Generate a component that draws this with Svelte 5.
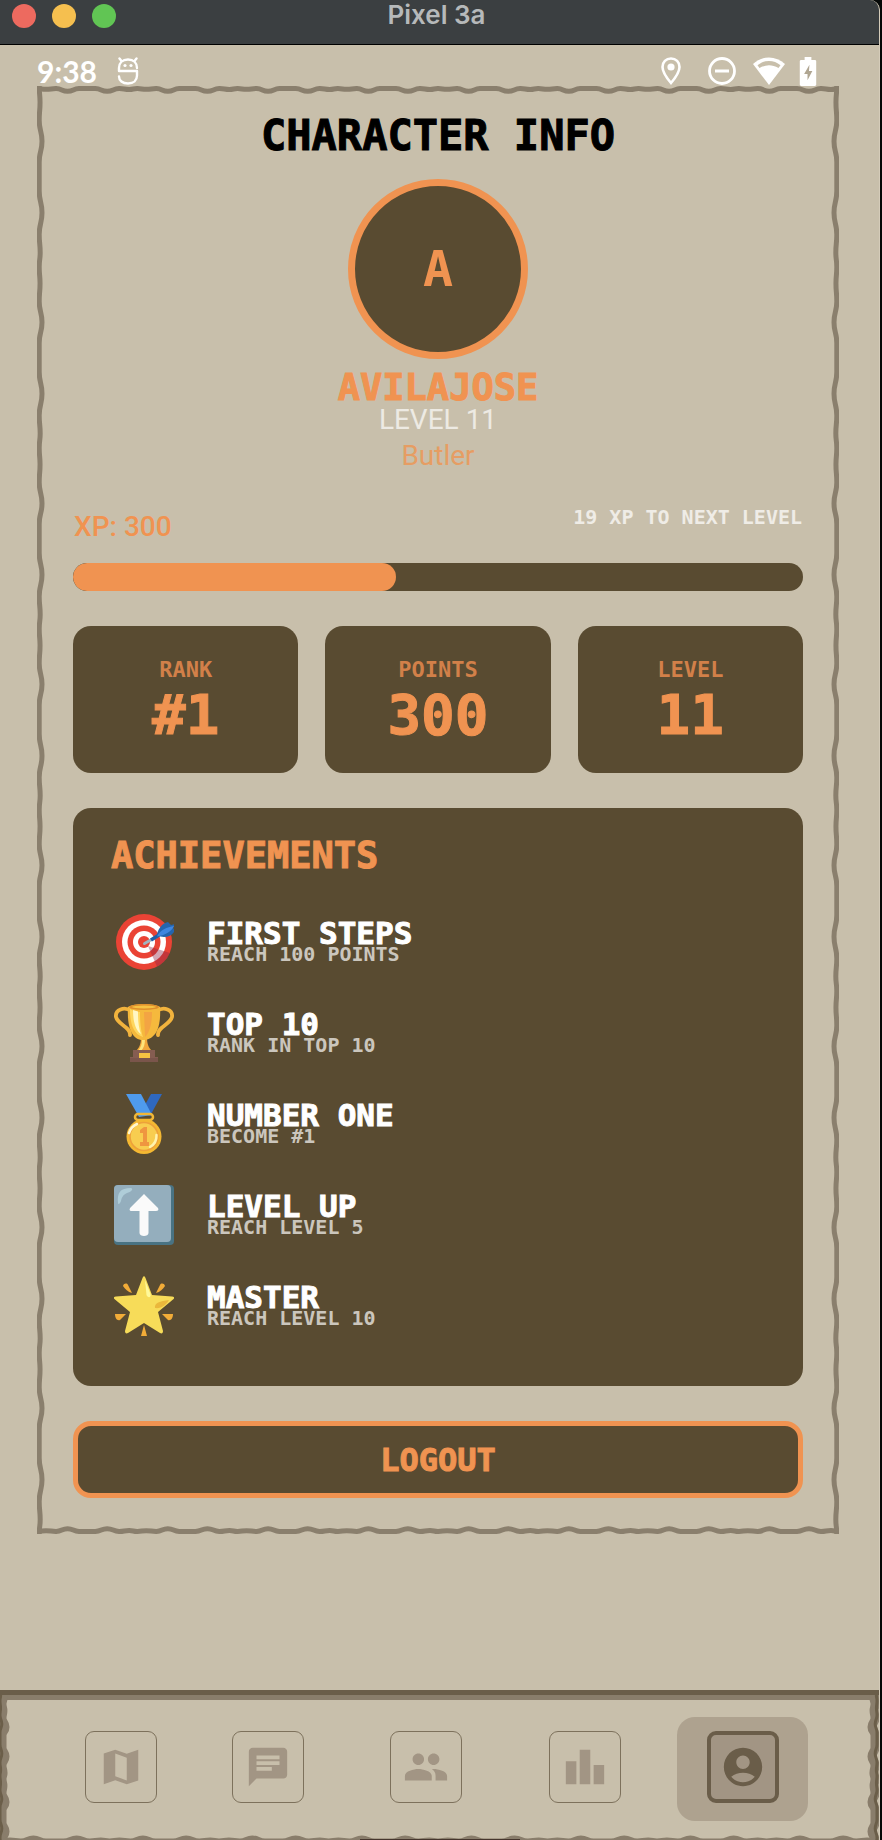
<script>
  const player = { name: 'AVILAJOSE', level: 11, title: 'Butler', xp: 300, toNext: 19, progress: 44.2 };

  const stats = [
    { label: 'RANK', value: '#1' },
    { label: 'POINTS', value: '300' },
    { label: 'LEVEL', value: '11' }
  ];

  const achievements = [
    { icon: 'target', name: 'FIRST STEPS', text: 'REACH 100 POINTS' },
    { icon: 'trophy', name: 'TOP 10', text: 'RANK IN TOP 10' },
    { icon: 'medal', name: 'NUMBER ONE', text: 'BECOME #1' },
    { icon: 'up', name: 'LEVEL UP', text: 'REACH LEVEL 5' },
    { icon: 'star', name: 'MASTER', text: 'REACH LEVEL 10' }
  ];

  const tabs = [
    { name: 'Map', path: 'M21 3L15 5.1 9 3 3 5V21L9 18.9l6 2.1 6-2V3zM15 19l-6-2.11V5l6 2.11V19z' },
    { name: 'Chat', path: 'M20 2H4c-1.1 0-1.99.9-1.99 2L2 22l4-4h14c1.1 0 2-.9 2-2V4c0-1.1-.9-2-2-2zM6 9h12v2H6V9zm8 5H6v-2h8v2zm4-6H6V6h12v2z' },
    { name: 'Friends', path: 'M16 11c1.66 0 2.99-1.34 2.99-3S17.66 5 16 5c-1.66 0-3 1.34-3 3s1.34 3 3 3zm-8 0c1.66 0 2.99-1.34 2.99-3S9.66 5 8 5C6.34 5 5 6.34 5 8s1.34 3 3 3zm0 2c-2.33 0-7 1.17-7 3.5V19h14v-2.5c0-2.33-4.67-3.5-7-3.5zm8 0c-.29 0-.62.02-.97.05 1.16.84 1.97 1.97 1.97 3.45V19h6v-2.5c0-2.33-4.67-3.5-7-3.5z' },
    { name: 'Leaderboard', path: 'M7.5 21H2V9h5.5v12zm7.25-18h-5.5v18h5.5V3zM22 11h-5.5v10H22V11z' },
    { name: 'Profile', active: true, path: 'M12 2C6.48 2 2 6.48 2 12s4.48 10 10 10 10-4.48 10-10S17.52 2 12 2zm0 4c1.93 0 3.5 1.57 3.5 3.5S13.93 13 12 13s-3.5-1.57-3.5-3.5S10.07 6 12 6zm0 14c-2.03 0-4.43-.82-6.14-2.88C7.55 15.8 9.68 15 12 15s4.45.8 6.14 2.12C16.43 19.18 14.03 20 12 20z' }
  ];

  // One period of the torn-paper edge: [position along the edge, depth].
  const profile = [[0, 0], [0.09, 0.3], [0.19, 0], [0.305, 1], [0.42, 0], [0.58, 0], [0.7, 1], [0.82, 0], [0.92, 0.35]];

  // Smooth wave running along an edge; `at` maps (along, depth) to a point.
  function wave(length, periods, base, depth, at) {
    const pts = [];
    for (let i = 0; i < periods; i++) {
      for (const [t, d] of profile) pts.push([((i + t) * length) / periods, base + d * depth]);
    }
    pts.push([length, base]);
    let d = 'M' + at(pts[0][0], pts[0][1]);
    for (let i = 1; i < pts.length; i++) {
      const [a0, d0] = pts[i - 1];
      const [a1, d1] = pts[i];
      const mid = (a0 + a1) / 2;
      d += 'C' + at(mid, d0) + ' ' + at(mid, d1) + ' ' + at(a1, d1);
    }
    return d;
  }

  const frame = [
    wave(802, 8, 2.5, 2.8, (a, d) => `${a} ${d}`),
    wave(802, 8, 2.5, 2.8, (a, d) => `${a} ${1449 - d}`),
    wave(1449, 8, 2.2, 2.8, (a, d) => `${d} ${a}`),
    wave(1449, 8, 2.2, 2.8, (a, d) => `${802 - d} ${a}`)
  ];

  const navSides = [
    wave(225, 3, 2, 3, (a, d) => `${d} ${a - 61}`),
    wave(225, 3, 4, 3, (a, d) => `${879 - d} ${a - 61}`)
  ];
  const navDark = [
    wave(225, 3, 0, 1.8, (a, d) => `${d} ${a - 64}`),
    wave(225, 3, 2, 1.8, (a, d) => `${879 - d} ${a - 64}`)
  ];
  const navBottom = wave(876, 8, 0, 3, (a, d) => `${a} ${151 - d}`);
</script>

<div class="shell">
  <header class="titlebar">
    <div class="lights"><i class="red"></i><i class="yellow"></i><i class="green"></i></div>
    <span class="window-title">Pixel 3a</span>
  </header>

  <div class="status">
    <span class="clock">9:38</span>
    <svg class="droid" width="22" height="28" viewBox="0 0 22 28" fill="none" stroke="#fff" stroke-width="2.4">
      <path d="M20 14H2V11C2 6 5.500 2.500 11 2.500S20 6 20 11M7 14H20V18.500C20 23.500 16.500 26.500 11 26.500S2 23.500 2 19.500" stroke-linejoin="round" stroke-linecap="round" />
      <path d="M4.500 4L2.500 1.500M17.500 4l2-2.500" stroke-linecap="round" />
      <circle cx="8" cy="8.500" r="1.600" fill="#fff" stroke="none" /><circle cx="14" cy="8.500" r="1.600" fill="#fff" stroke="none" />
    </svg>
    <div class="signals">
      <svg width="20" height="28" viewBox="0 0 20 28"><path d="M10 1.500C5 1.500 1.500 5 1.500 10 1.500 16 10 26 10 26s8.500-10 8.500-16C18.500 5 15 1.500 10 1.500z" fill="none" stroke="#fff" stroke-width="2.600" /><circle cx="10" cy="10" r="3.600" fill="#fff" /></svg>
      <svg class="dnd" width="28" height="28" viewBox="0 0 28 28"><circle cx="14" cy="14" r="12.500" fill="none" stroke="#fff" stroke-width="2.800" /><path d="M7 14h14" stroke="#fff" stroke-width="3" /></svg>
      <svg class="wifi" width="32" height="28" viewBox="0 0 32 28"><path d="M0 7C9-1.800 23-1.800 32 7L16 28z" fill="#fff" /><path d="M4.500 8.200C11 2.500 21 2.500 27.500 8.200L25.500 11C19 7.200 13 7.200 6.500 11z" fill="#c8bfab" /></svg>
      <svg class="battery" width="18" height="29" viewBox="0 0 18 30"><path d="M5.500 0h7v3H16c1 0 1.500.6 1.500 1.500v24c0 .9-.6 1.500-1.500 1.500H2c-.9 0-1.500-.6-1.500-1.500v-24C.5 3.600 1 3 2 3h3.500z" fill="#fff" /><path d="M10.500 8L5 17.500h3.500V24l5-9.500H10z" fill="#b0a692" /></svg>
    </div>
  </div>

  <main class="panel">
    <svg class="frame" viewBox="0 0 802 1449" preserveAspectRatio="none" aria-hidden="true">
      {#each frame as d}<path {d} />{/each}
    </svg>

    <section class="profile">
      <h1>CHARACTER INFO</h1>
      <div class="avatar">A</div>
      <h2>{player.name}</h2>
      <p class="level">LEVEL {player.level}</p>
      <p class="role">{player.title}</p>
    </section>

    <section class="xp">
      <div class="xp-row">
        <span class="xp-now">XP: {player.xp}</span>
        <span class="xp-next">{player.toNext} XP TO NEXT LEVEL</span>
      </div>
      <div class="bar" role="progressbar" aria-valuenow={player.progress} aria-valuemin="0" aria-valuemax="100" aria-label="XP">
        <div class="fill" style="width: {player.progress}%"></div>
      </div>
    </section>

    <section class="stats">
      {#each stats as s}
        <div class="stat">
          <span class="stat-label">{s.label}</span>
          <strong>{s.value}</strong>
        </div>
      {/each}
    </section>

    <section class="achievements">
      <h3>ACHIEVEMENTS</h3>
      <ul>
        {#each achievements as a}
          <li>
            <svg viewBox="0 0 60 60" width="60" height="60" aria-hidden="true">
              {#if a.icon === 'target'}
                <circle cx="30" cy="30" r="28" fill="#ea4335" />
                <circle cx="30" cy="30" r="22" fill="#fff" />
                <circle cx="30" cy="30" r="16.500" fill="#ea4335" />
                <circle cx="30" cy="30" r="11" fill="#fff" />
                <circle cx="30" cy="30" r="6" fill="#ea4335" />
                <path d="M34 34L56 41A28 28 0 0 1 43 54.500z" fill="#8d2344" opacity=".4" />
                <path d="M30.500 31.500L42 25" stroke="#9fb4c0" stroke-width="3" stroke-linecap="round" />
                <path d="M37 28l8-5" stroke="#1f5fa8" stroke-width="3.500" />
                <path d="M43 24c0-6 5-13 11-14l3 3 4-1-2 4 2 2c-2 5-6 7-11 7z" fill="#2465ae" />
                <path d="M43 24.500C46 18 53 15 60 14c-2 5-8 9-17 10.500z" fill="#3f86e0" />
              {:else if a.icon === 'trophy'}
                <path d="M17 8C10 3 1 7 2 14c2 8 15 10 14 18M43 8c7-5 16-1 15 6-2 8-15 10-14 18" fill="none" stroke="#f2b33d" stroke-width="3.800" stroke-linecap="round" />
                <path d="M27 34h6c0 6 1 10 5 14H22c4-4 5-8 5-14z" fill="#f2a73b" />
                <path d="M28 36h3c0 5-1 9-4 12h-3c3-4 4-7 4-12z" fill="#ffe57a" />
                <path d="M14 4c5-4 27-4 32 0 1 16-2 32-16 33S13 20 14 4z" fill="#f5b93d" />
                <path d="M16 6c3 2 7 3 10 3 0 12 1 19 3 25C19 31 16 20 16 6z" fill="#ffd75e" />
                <path d="M19 7l5 1.500c0 9 .500 16 3 22.500-6-4-8-14-8-24z" fill="#fff7c4" />
                <path d="M30 9h8c0 11-2 20-7 25z" fill="#f3a443" />
                <ellipse cx="30" cy="4" rx="15" ry="3" fill="#df8f2c" /><ellipse cx="30" cy="4" rx="12" ry="1.500" fill="#f6c243" />
                <path d="M19 47h22v7h3v5H16v-5h3z" fill="#855d51" />
                <path d="M16 55h28v4H16z" fill="#7a554b" />
                <rect x="25" y="50" width="11" height="5" fill="#f5c342" />
              {:else if a.icon === 'medal'}
                <path d="M37 0h11L36 22l-9-4z" fill="#2f68bf" />
                <path d="M12 0h15l11 21-13 2z" fill="#4f9bed" />
                <rect x="21" y="20" width="18" height="6" rx="3" fill="none" stroke="#f2b736" stroke-width="2.500" />
                <circle cx="30" cy="42.500" r="17.500" fill="#f4b832" />
                <circle cx="30" cy="42.500" r="14" fill="#f8cd50" stroke="#eda13b" stroke-width="1.600" />
                <path d="M15 39a15 15 0 0 1 8-9" fill="none" stroke="#fff8d0" stroke-width="2.500" stroke-linecap="round" />
                <path d="M42.500 41a13 13 0 0 1-6.500 12" fill="none" stroke="#fff3ad" stroke-width="2.500" stroke-linecap="round" />
                <path d="M26 36l4-3h3v15h2v4h-9v-4h3v-9h-3z" fill="#ef9640" />
              {:else if a.icon === 'up'}
                <rect x="0" y="0" width="60" height="60" rx="4" fill="#497383" />
                <rect x="0" y="0" width="57" height="57" rx="4" fill="#94aebd" />
                <path d="M4 18C3 8 6 3 17 3c3 1 0 4-4 5-4 2-5 4-6 8-1 3-3 4-3 2z" fill="#afcdd8" />
                <path d="M30 9l14 14c1 2 0 3-2 3h-7.500v22c0 4-9 4-9 0V26H18c-3 0-3-2-1-4z" fill="#fafafa" />
              {:else}
                <g fill="#f2ac38">
                  <path d="M9 10c1-3 4-3 5-1l4 8c-4-1-7-4-9-7zM51 10c-1-3-4-3-5-1l-4 8c4-1 7-4 9-7zM1 38l11 0-6 6c-3 1-5-2-5-6zM59 38l-11 0 6 6c3 1 5-2 5-6zM27 60l3-11 3 11z" />
                </g>
                <path d="M28.500 2c1-2.500 2-2.500 3 0L38 19l20 1.500c3 .5 3 1.500 1 3L44 36l5 19c0 2-1 3-3 2L30 47 14 57c-2 1-3 0-3-2l5-19L1 23.500c-2-1.500-2-2.500 1-3L22 19z" fill="#f7dc59" />
                <path d="M31 4l5.500 14c1 4-3 4-4 1z" fill="#fff99a" />
                <path d="M41 32c-1-5 5-7 14-8-3 5-8 9-14 8z" fill="#eab83c" />
              {/if}
            </svg>
            <div class="text">
              <span class="name">{a.name}</span>
              <span class="desc">{a.text}</span>
            </div>
          </li>
        {/each}
      </ul>
    </section>

    <button class="logout" type="button">LOGOUT</button>
  </main>

  <nav>
    <svg class="nav-edge" viewBox="0 0 879 150" preserveAspectRatio="none" aria-hidden="true">
      <path class="medium" d="M0 7.500H879" />
      {#each navSides as d}<path class="medium side" {d} />{/each}
      <path class="medium" d={navBottom} />
      {#each navDark as d}<path class="dark" {d} />{/each}
      <path class="top" d="M0 2.500H879" />
    </svg>
    {#each tabs as t}
      <a href="#{t.name.toLowerCase()}" class:active={t.active} aria-label={t.name}>
        <span class="box"><svg viewBox="0 0 24 24" width="46" height="46"><path d={t.path} /></svg></span>
      </a>
    {/each}
    <i class="home"></i>
  </nav>
</div>

<style>
  :global(body) { margin: 0; background: #050807; }

  .shell {
    --paper: #c8bfab;
    --brown: #594b31;
    --orange: #f09351;
    --pixel: 'DejaVu Sans Mono', 'Liberation Mono', monospace;
    box-sizing: border-box;
    min-height: 100vh;
    margin-right: 2px;
    border-right: 1px solid #d5ccba;
    border-top-right-radius: 10px;
    overflow: hidden;
    display: flex;
    flex-direction: column;
    background: var(--paper);
    font-family: Roboto, sans-serif;
  }
  h1, h2, h3, p, ul { margin: 0; padding: 0; }
  h1, h2, h3 { font-family: var(--pixel); font-weight: 700; white-space: nowrap; }
  h1, h2, h3, .stat strong, .name, .logout { -webkit-text-stroke: 1px currentColor; }

  .titlebar {
    box-sizing: border-box;
    height: 45px;
    display: grid;
    grid-template-columns: 1fr auto 1fr;
    padding: 0 18px 0 12px;
    background: #3b3f41;
    border-bottom: 1px solid #000;
  }
  .lights { display: flex; gap: 16px; padding-top: 4px; }
  .lights i { width: 24px; height: 24px; border-radius: 50%; }
  .red { background: #ed6a5f; }
  .yellow { background: #f5bf4f; }
  .green { background: #61c554; }
  .window-title { font: 600 26px/30px Inter, sans-serif; color: #b6b9ba; }

  .status {
    box-sizing: border-box;
    height: 41px;
    padding: 12px 62px 0 37px;
    display: flex;
    align-items: flex-start;
  }
  .clock { font: 700 30px/28px Lato, sans-serif; color: #fff; }
  .droid { margin-left: 20px; }
  .signals { margin-left: auto; display: flex; }
  .dnd { margin-left: 27px; }
  .wifi { margin-left: 17px; }
  .battery { margin-left: 14px; }

  .panel {
    position: relative;
    margin: 0 40px 0 37px;
    padding: 26px 36px 36px;
    display: flex;
    flex-direction: column;
    gap: 35px;
  }
  .frame { position: absolute; inset: 0; width: 100%; height: 100%; pointer-events: none; }
  .frame path { fill: none; stroke: #8a7f6d; stroke-width: 5; vector-effect: non-scaling-stroke; }

  .profile { display: flex; flex-direction: column; align-items: center; }
  h1 { font-size: 42px; line-height: 48px; color: #000; }
  .avatar {
    box-sizing: border-box;
    width: 180px;
    height: 180px;
    margin: 19px 0 15px;
    border: 7px solid var(--orange);
    border-radius: 50%;
    display: flex;
    align-items: center;
    justify-content: center;
    background: var(--brown);
    color: var(--orange);
    font: 700 50px/50px var(--pixel);
  }
  h2 { font-size: 37px; line-height: 28px; color: var(--orange); }
  .level, .role { font-size: 28px; line-height: 36px; }
  .level { color: #edeae3; }
  .role { color: #e69d63; }

  .xp { display: flex; flex-direction: column; gap: 18px; }
  .xp-row { display: flex; justify-content: space-between; align-items: flex-start; padding: 0 1px; }
  .xp-now { font-size: 28px; line-height: 36px; font-weight: 500; color: var(--orange); }
  .xp-next { font: 700 20px/16px var(--pixel); color: #efece6; }
  .bar { height: 28px; border-radius: 14px; background: var(--brown); overflow: hidden; }
  .fill { height: 100%; border-radius: 14px; background: var(--orange); }

  .stats { display: grid; grid-template-columns: repeat(3, 1fr); gap: 27px; }
  .stat {
    display: flex;
    flex-direction: column;
    align-items: center;
    gap: 8px;
    padding: 33px 0 32px;
    border-radius: 18px;
    background: var(--brown);
    color: var(--orange);
  }
  .stat-label { font: 700 22px/22px var(--pixel); color: #d28049; }
  .stat strong { font: 700 56px/52px var(--pixel); }

  .achievements { padding: 30px 38px 50px; border-radius: 18px; background: var(--brown); }
  h3 { font-size: 37px; line-height: 36px; color: var(--orange); }
  ul { list-style: none; margin-top: 38px; display: flex; flex-direction: column; gap: 31px; }
  li { display: flex; align-items: center; gap: 33px; padding-left: 3px; }
  .text { display: flex; flex-direction: column; font-family: var(--pixel); white-space: nowrap; }
  .name { font-size: 31px; line-height: 24px; font-weight: 700; color: #fff; }
  .desc { font-size: 20px; line-height: 18px; font-weight: 700; color: #cbc6bd; }

  .logout {
    height: 77px;
    padding: 0;
    border: 5px solid var(--orange);
    border-radius: 18px;
    background: var(--brown);
    color: var(--orange);
    font: 700 32px/36px var(--pixel);
  }

  nav {
    box-sizing: border-box;
    position: relative;
    height: 150px;
    margin-top: auto;
    padding: 27px 57px 19px 53px;
    display: grid;
    grid-template-columns: 136fr repeat(4, 158fr);
    overflow: hidden;
  }
  .nav-edge { position: absolute; inset: 0; width: 100%; height: 100%; }
  .nav-edge path { fill: none; }
  .nav-edge .medium { stroke: #897d6b; stroke-width: 5; }
  .nav-edge .side { stroke-width: 9; }
  .nav-edge .dark { stroke: #6b5e49; stroke-width: 3; }
  .nav-edge .top { stroke: #6a5d49; stroke-width: 5; }
  nav a {
    box-sizing: border-box;
    position: relative;
    justify-self: center;
    width: 131px;
    padding-bottom: 4px;
    display: flex;
    align-items: center;
    justify-content: center;
    border-radius: 18px;
  }
  .box {
    box-sizing: border-box;
    width: 72px;
    height: 72px;
    display: flex;
    align-items: center;
    justify-content: center;
    flex: none;
    border: 1px solid #7d715c;
    border-radius: 9px;
  }
  .box path { fill: #a29584; }
  .active { background: #aea28f; }
  .active .box { border: 4px solid #6a5d49; background: #a29584; }
  .active .box path { fill: #6a5d49; }
  .home {
    position: absolute;
    bottom: 0;
    left: 50%;
    width: 160px;
    height: 1px;
    transform: translateX(-50%);
    background: #46362d;
  }
</style>
